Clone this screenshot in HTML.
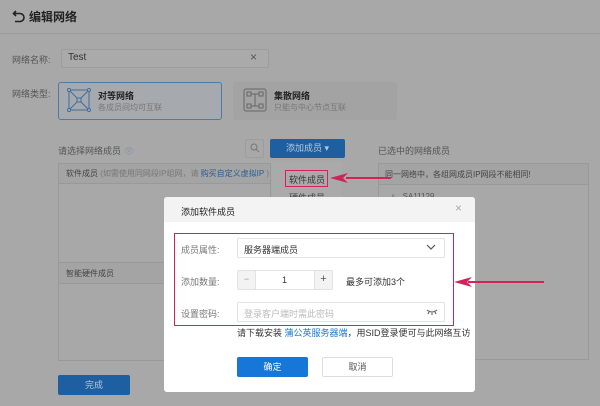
<!DOCTYPE html>
<html><head><meta charset="utf-8"><style>
*{box-sizing:border-box;margin:0;padding:0}
body{width:600px;height:406px;overflow:hidden;background:#a8a8a8;font-family:"Liberation Sans","Noto Sans CJK SC",sans-serif;font-size:9px;color:#333;position:relative}
.a{position:absolute;white-space:nowrap}
.g{color:#555}
.lg{color:#777}
.bx{position:absolute;border:1px solid #999}
</style></head><body>
<svg class="a" style="left:12px;top:9px" width="14" height="14" viewBox="0 0 14 14"><path d="M4 2 L1.5 4.5 L4 7 M1.5 4.5 H8 A4 4 0 0 1 8 12.5 H3" fill="none" stroke="#222" stroke-width="1.6"/></svg>
<div class="a" style="left:29px;top:8px;font-size:12px;color:#222;font-weight:bold">编辑网络</div>
<div class="a" style="left:0;top:33px;width:600px;height:1px;background:#9c9c9c"></div>

<div class="a g" style="left:12px;top:53px">网络名称:</div>
<div class="a" style="left:61px;top:49px;width:208px;height:19px;border:1px solid #9d9d9d;background:#aaa;border-radius:2px"></div>
<div class="a" style="left:68px;top:52px;font-size:10px;color:#333">Test</div>
<div class="a" style="left:250px;top:50px;font-size:12px;color:#555">×</div>

<div class="a g" style="left:12px;top:87px">网络类型:</div>
<div class="a" style="left:58px;top:82px;width:164px;height:38px;border:1px solid #4f7aa5;border-radius:3px;background:#a6a9ad"></div>
<svg class="a" style="left:67px;top:88px" width="24" height="24" viewBox="0 0 24 24"><g fill="none" stroke="#3e6f9e" stroke-width="1"><rect x="2" y="2" width="20" height="20"/><path d="M2 2 L22 22 M22 2 L2 22"/><rect x="10" y="10" width="4" height="4" fill="#a6a9ad"/><circle cx="2" cy="2" r="1.6" fill="#a6a9ad"/><circle cx="22" cy="2" r="1.6" fill="#a6a9ad"/><circle cx="2" cy="22" r="1.6" fill="#a6a9ad"/><circle cx="22" cy="22" r="1.6" fill="#a6a9ad"/></g></svg>
<div class="a" style="left:98px;top:89px;font-weight:bold;color:#222">对等网络</div>
<div class="a lg" style="left:98px;top:102px;font-size:8px">各成员间均可互联</div>
<div class="a" style="left:233px;top:82px;width:164px;height:38px;background:#a3a3a3;border-radius:3px"></div>
<svg class="a" style="left:243px;top:88px" width="24" height="24" viewBox="0 0 24 24"><g fill="none" stroke="#666" stroke-width="1"><rect x="1" y="1" width="22" height="22" rx="2"/><rect x="4" y="4" width="4" height="4"/><rect x="16" y="4" width="4" height="4"/><rect x="4" y="16" width="4" height="4"/><rect x="16" y="16" width="4" height="4"/><path d="M8 6 H16 M12 6 V18 M8 18 H16"/></g></svg>
<div class="a" style="left:274px;top:89px;font-weight:bold;color:#222">集散网络</div>
<div class="a lg" style="left:274px;top:102px;font-size:8px">只能与中心节点互联</div>

<div class="a g" style="left:58px;top:144px">请选择网络成员 <span style="color:#8a9aab">👁</span></div>
<div class="a" style="left:245px;top:139px;width:19px;height:19px;border:1px solid #9d9d9d;border-radius:2px"></div>
<svg class="a" style="left:250px;top:143px" width="10" height="10"><circle cx="4" cy="4" r="3" fill="none" stroke="#777"/><path d="M6.3 6.3 L9 9" stroke="#777"/></svg>
<div class="a" style="left:270px;top:139px;width:75px;height:19px;background:#1d5fa0;border-radius:2px;color:#b8c8da;text-align:center;line-height:19px">添加成员 ▾</div>

<div class="bx" style="left:58px;top:163px;width:213px;height:198px"></div>
<div class="a" style="left:59px;top:164px;width:211px;height:20px;background:#a4a4a4;border-bottom:1px solid #999"></div>
<div class="a" style="left:66px;top:168px;font-size:8px;color:#444">软件成员 <span style="color:#777">(如需使用同网段IP组网，请 </span><span style="color:#2a5d95">购买自定义虚拟IP</span><span style="color:#777"> )</span></div>
<div class="a" style="left:59px;top:262px;width:211px;height:22px;background:#a4a4a4;border-top:1px solid #999;border-bottom:1px solid #999"></div>
<div class="a" style="left:66px;top:268px;font-size:8px;color:#444">智能硬件成员</div>

<div class="a" style="left:272px;top:162px;width:70px;height:50px;background:#aaa;border-radius:2px"></div>
<div class="a" style="left:285px;top:170px;width:43px;height:17px;border:1px solid #d0235a"></div>
<div class="a" style="left:289px;top:173px;color:#333">软件成员</div>
<div class="a" style="left:289px;top:191px;color:#444">硬件成员</div>

<div class="a g" style="left:378px;top:144px">已选中的网络成员</div>
<div class="bx" style="left:378px;top:163px;width:211px;height:197px"></div>
<div class="a" style="left:379px;top:164px;width:209px;height:21px;background:#a4a4a4;border-bottom:1px solid #999"></div>
<div class="a" style="left:385px;top:169px;font-size:8px;color:#444">同一网络中，各组网成员IP网段不能相同!</div>
<div class="a" style="left:390px;top:192px;font-size:8px;color:#555">♀ &nbsp; SA11129</div>

<div class="a" style="left:346px;top:177px;width:45px;height:2px;background:#d0235a"></div>
<svg class="a" style="left:330px;top:172px" width="20" height="12"><path d="M0 6 L18 1 L13 6 L18 11 Z" fill="#d0235a"/></svg>

<div class="a" style="left:58px;top:375px;width:72px;height:20px;background:#1d5fa0;border-radius:2px;color:#b8c8da;text-align:center;line-height:20px">完成</div>

<div class="a" style="left:164px;top:197px;width:311px;height:195px;background:#fff;border-radius:3px;overflow:hidden">
<div style="height:25px;background:#f3f3f3"></div>
</div>
<div class="a" style="left:181px;top:205px;font-size:9px;color:#222">添加软件成员</div>
<div class="a" style="left:455px;top:201px;font-size:12px;color:#aaa">×</div>
<div class="a" style="left:174px;top:233px;width:280px;height:93px;border:1px solid #d0235a"></div>
<div class="a lg" style="left:181px;top:243px">成员属性:</div>
<div class="a lg" style="left:181px;top:275px">添加数量:</div>
<div class="a lg" style="left:181px;top:307px">设置密码:</div>
<div class="a" style="left:237px;top:238px;width:208px;height:20px;border:1px solid #e2e2e2;border-radius:2px"></div>
<div class="a" style="left:244px;top:243px;color:#333">服务器端成员</div>
<svg class="a" style="left:426px;top:243px" width="10" height="8"><path d="M1 2 L5 6 L9 2" fill="none" stroke="#555" stroke-width="1.2"/></svg>
<div class="a" style="left:237px;top:270px;width:96px;height:20px;border:1px solid #e2e2e2;border-radius:2px"></div>
<div class="a" style="left:238px;top:271px;width:18px;height:18px;background:#f3f3f3;border-right:1px solid #e2e2e2;text-align:center;line-height:17px;color:#999">−</div>
<div class="a" style="left:314px;top:271px;width:18px;height:18px;background:#f3f3f3;border-left:1px solid #e2e2e2;text-align:center;line-height:17px;color:#555;font-size:11px">+</div>
<div class="a" style="left:282px;top:275px;color:#333">1</div>
<div class="a" style="left:346px;top:275px;color:#333">最多可添加3个</div>
<div class="a" style="left:237px;top:302px;width:208px;height:20px;border:1px solid #e2e2e2;border-radius:2px"></div>
<div class="a" style="left:244px;top:307px;color:#bbb">登录客户端时需此密码</div>
<svg class="a" style="left:426px;top:308px" width="12" height="7"><path d="M1 2 Q6 6 11 2 M3 4 L2 6 M6 5 V7 M9 4 L10 6" fill="none" stroke="#555" stroke-width="1"/></svg>
<div class="a" style="left:237px;top:326px;color:#333">请下载安装 <span style="color:#1677d9">蒲公英服务器端</span>，用SID登录便可与此网络互访</div>
<div class="a" style="left:237px;top:357px;width:71px;height:20px;background:#1677d9;border-radius:2px;color:#fff;text-align:center;line-height:20px">确定</div>
<div class="a" style="left:322px;top:357px;width:71px;height:20px;border:1px solid #ddd;border-radius:2px;color:#555;text-align:center;line-height:18px">取消</div>

<div class="a" style="left:468px;top:281px;width:76px;height:2px;background:#d0235a"></div>
<svg class="a" style="left:454px;top:276px" width="20" height="12"><path d="M0 6 L18 1 L13 6 L18 11 Z" fill="#d0235a"/></svg>
</body></html>
